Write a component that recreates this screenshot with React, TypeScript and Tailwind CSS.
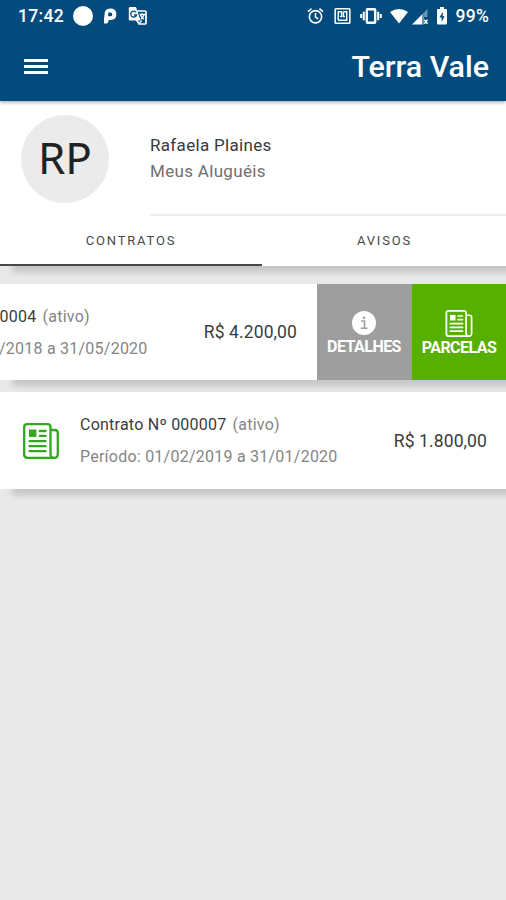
import React from "react";

function Newspaper({ className }: { className: string }) {
  return (
    <svg viewBox="0 0 36 36" className={className} fill="none" stroke="currentColor" strokeWidth="2.3">
      <path d="M27.5 7V31Q27.5 34.8 31.2 34.8H4.5Q1.2 34.8 1.2 31.5V4Q1.2 1.2 4 1.2H24.5Q27.5 1.2 27.5 4V7H31.5Q34.8 7 34.8 10V31Q34.8 34.8 31.2 34.8" strokeLinejoin="round" />
      <rect x="6" y="6.5" width="7.4" height="7.4" fill="currentColor" stroke="none" />
      <path d="M16.8 8H22.6M16.8 12.8H22.6M6.5 18.2H22.6M6.5 23.2H22.6M6.5 28.2H22.6" strokeLinecap="round" />
    </svg>
  );
}

function StatusBar() {
  return (
    <div className="flex h-8 items-center pl-[18px] text-[17.5px] font-medium">
      <span className="w-[55px] pt-px tracking-[0.3px]">17:42</span>
      <span className="size-5 rounded-full bg-white" />
      <svg viewBox="0 0 14 18" className="ml-[10px] h-[18px] w-[14px]" fill="currentColor">
        <path
          fillRule="evenodd"
          d="M1.5 7.5Q1.5 1.5 7.3 1.5Q13.4 1.5 13.4 7.3Q13.4 13 7.6 13H5.5V14Q5.5 16.5 3.2 16.5H1V11.2Q1.5 9.5 1.5 7.5ZM5.2 5.5V9.3H7.3Q9.3 9.3 9.3 7.4Q9.3 5.5 7.3 5.5Z"
        />
      </svg>
      <svg viewBox="0 0 20 20" className="ml-[11px] size-5" fill="none" stroke="currentColor">
        <path d="M8 5H17Q18 5 18 6V17Q18 18 17 18H11L8 13" strokeWidth="1.7" />
        <path d="M2 1H8L12.5 14.5H2Q.8 14.5.8 13.3V2.2Q.8 1 2 1Z" fill="currentColor" stroke="none" />
        <path d="M8.2 6.3A3 3 0 1 0 8.6 9H6" stroke="#034b7d" strokeWidth="1.3" />
        <path d="M11.5 8.5H17M14 7.3V8.5M12.5 9Q13.8 12 16 13.3M16 8.8Q15 12 12.8 13.2M11 17.8L13.5 14.5" strokeWidth="1.3" />
      </svg>
      <span className="flex-1" />
      <svg viewBox="0 0 18 18" className="h-[18px] w-[17px]" fill="none" stroke="currentColor" strokeWidth="1.7">
        <circle cx="9" cy="9.8" r="6.5" />
        <path d="M1 4.4L4.8 1.2M17 4.4L13.2 1.2M9 5.7V10.2L12 12" strokeWidth="1.6" />
      </svg>
      <svg viewBox="0 0 18 18" className="ml-[10px] h-[18px] w-[17px]" fill="none" stroke="currentColor" strokeWidth="1.6">
        <rect x="1.2" y="1.2" width="15.6" height="15.6" rx="1" />
        <path d="M4.5 13.5V4.5H8V9.5H6.5M10 4.5H13.5V13.5H4.5M10 4.5V9.5H11.5" strokeWidth="1.5" />
      </svg>
      <svg viewBox="0 0 22 18" className="ml-[9px] h-[18px] w-[22px]" fill="none" stroke="currentColor" strokeWidth="2">
        <rect x="6.8" y="2.2" width="8.4" height="13.6" rx=".8" strokeWidth="2.4" />
        <path d="M3.8 4.8V13.2M1.2 7V11M18.2 4.8V13.2M20.8 7V11" />
      </svg>
      <svg viewBox="0 0 18 16" className="ml-[8px] h-4 w-[18px]" fill="currentColor">
        <path d="M0 4Q9-2 18 4L9 15.5Z" />
      </svg>
      <svg viewBox="0 0 16 17" className="ml-[4px] mt-px h-[17px] w-4" fill="currentColor">
        <path d="M0 16.5L10 6.5V16.5Z" />
        <path d="M10 6.5L15.5 1V9H12V16.5H10Z" opacity=".4" />
        <path d="M12.3 11.8L15.5 15.8M15.5 11.8L12.3 15.8" stroke="currentColor" strokeWidth="1.4" />
      </svg>
      <svg viewBox="0 0 10 18" className="ml-[9px] h-[18px] w-[10px]" fill="currentColor">
        <path d="M3 0H7V2H9Q10 2 10 3V16.5Q10 17.5 9 17.5H1Q0 17.5 0 16.5V3Q0 2 1 2H3Z" />
        <path d="M6 4.8L2.4 10.5H4.6V15L7.7 9.2H5.7Z" fill="#034b7d" />
      </svg>
      <span className="ml-[9px] mr-[17px] pt-px tracking-[0.2px]">99%</span>
    </div>
  );
}

function ContractInfo({ code, period, price }: { code: string; period: string; price: string }) {
  return (
    <div className="flex h-full w-[506px] shrink-0 items-center pl-[23px] pr-[19px]">
      <Newspaper className="size-9 text-[#32a91d]" />
      <div className="ml-[21px] flex-1 whitespace-nowrap pt-px text-[16px] leading-8 tracking-[0.24px] text-[#858585]">
        <p>
          <span className="mr-[6px] text-[#3c3c3c]">Contrato Nº {code}</span>
          (ativo)
        </p>
        <p>Período: {period}</p>
      </div>
      <p className="whitespace-nowrap pt-px text-[17.5px] tracking-[0.1px] text-[#3c3c3c]">{price}</p>
    </div>
  );
}

export default function App() {
  return (
    <div className="flex h-[900px] w-[506px] flex-col overflow-hidden bg-[#e9e9e9] font-[Roboto,sans-serif]">
      <header className="z-10 h-[101px] shrink-0 bg-[#034b7d] text-white shadow-[0_1px_4px_rgba(0,0,0,0.4)]">
        <StatusBar />
        <div className="flex h-[69px] items-center justify-between pl-6 pr-[17px]">
          <div className="flex flex-col gap-[3px]">
            <span className="h-[3px] w-6 bg-white" />
            <span className="h-[3px] w-6 bg-white" />
            <span className="h-[3px] w-6 bg-white" />
          </div>
          <h1 className="text-[30.4px] font-medium">Terra Vale</h1>
        </div>
      </header>

      <section className="h-[165px] shrink-0 bg-white shadow-[12px_6px_7px_rgba(0,0,0,0.16)]">
        <div className="flex h-[115px]">
          <div className="ml-[21px] mt-[14px] flex size-[88px] items-center justify-center rounded-full bg-[#ebebeb] pb-[5px] font-['Noto_Sans',sans-serif] text-[44px] text-[#222]">
            RP
          </div>
          <div className="ml-[41px] flex-1 border-b-2 border-[#eeeeee] pt-[31px] text-[17px] leading-[26px] tracking-[0.32px]">
            <p className="text-[#3a3a3a]">Rafaela Plaines</p>
            <p className="text-[#707070]">Meus Aluguéis</p>
          </div>
        </div>
        <nav className="flex h-[50px] text-center text-[13px] leading-[49px] tracking-[1.8px] text-[#484848]">
          <div className="w-[262px] border-b-2 border-[#484848]">CONTRATOS</div>
          <div className="flex-1 pl-px">AVISOS</div>
        </nav>
      </section>

      <main className="flex flex-col gap-3 pt-[18px]">
        <article className="flex h-24 bg-white shadow-[12px_6px_7px_rgba(0,0,0,0.16)]">
          <div className="flex w-[316px] justify-end overflow-hidden">
            <ContractInfo code="000004" period="01/06/2018 a 31/05/2020" price="R$ 4.200,00" />
          </div>
          <span className="w-px" />
          <button className="flex w-[95px] flex-col items-center bg-[#9e9e9e] pr-px pt-[27px] text-[16px] font-bold leading-[20px] tracking-[-0.55px] text-white">
            <svg viewBox="0 0 24 24" className="mb-[2px] size-6 shrink-0">
              <circle cx="12" cy="12" r="12" fill="currentColor" />
              <path d="M9 10H12.5V17M8.8 17.2H15.5" fill="none" stroke="#9e9e9e" strokeWidth="1.6" />
              <circle cx="12" cy="6.8" r="1.3" fill="#9e9e9e" />
            </svg>
            DETALHES
          </button>
          <button className="flex w-[94px] flex-col items-center bg-[#57b000] pt-[25.5px] text-[16px] font-bold leading-[20px] tracking-[-0.55px] text-white">
            <Newspaper className="mb-[1.5px] h-[27px] w-7 shrink-0" />
            PARCELAS
          </button>
        </article>
        <article className="h-[97px] bg-white shadow-[12px_6px_7px_rgba(0,0,0,0.16)]">
          <ContractInfo code="000007" period="01/02/2019 a 31/01/2020" price="R$ 1.800,00" />
        </article>
      </main>
    </div>
  );
}
